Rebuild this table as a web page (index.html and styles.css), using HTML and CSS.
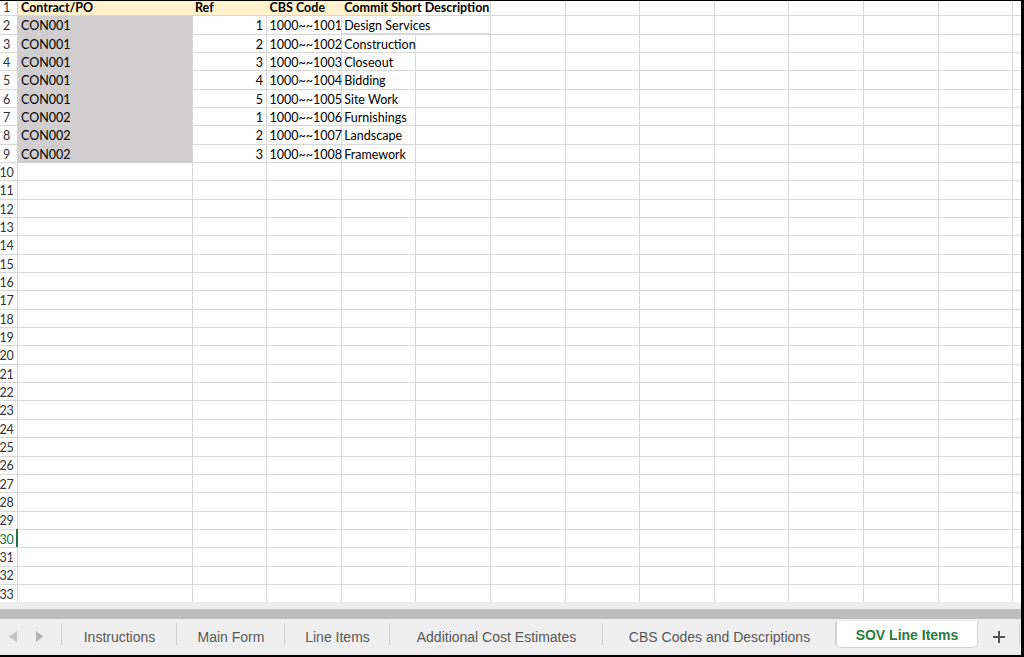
FILE: index.html
```html
<!DOCTYPE html>
<html>
<head>
<meta charset="utf-8">
<title>SOV Line Items</title>
<link rel="stylesheet" href="styles.css">
</head>
<body>
<div class="frame">
  <div class="sheet">
    <div class="grid">
      <div class="rh">1</div>
      <div class="cell hdr">Contract/PO</div>
      <div class="cell hdr">Ref</div>
      <div class="cell hdr">CBS Code</div>
      <div class="cell hdr">Commit Short Description</div>

      <div class="rh">2</div>
      <div class="cell fill">CON001</div>
      <div class="cell num">1</div>
      <div class="cell">1000~~1001</div>
      <div class="cell overflow">Design Services</div>

      <div class="rh">3</div>
      <div class="cell fill">CON001</div>
      <div class="cell num">2</div>
      <div class="cell">1000~~1002</div>
      <div class="cell">Construction</div>

      <div class="rh">4</div>
      <div class="cell fill">CON001</div>
      <div class="cell num">3</div>
      <div class="cell">1000~~1003</div>
      <div class="cell">Closeout</div>

      <div class="rh">5</div>
      <div class="cell fill">CON001</div>
      <div class="cell num">4</div>
      <div class="cell">1000~~1004</div>
      <div class="cell">Bidding</div>

      <div class="rh">6</div>
      <div class="cell fill">CON001</div>
      <div class="cell num">5</div>
      <div class="cell">1000~~1005</div>
      <div class="cell">Site Work</div>

      <div class="rh">7</div>
      <div class="cell fill">CON002</div>
      <div class="cell num">1</div>
      <div class="cell">1000~~1006</div>
      <div class="cell">Furnishings</div>

      <div class="rh">8</div>
      <div class="cell fill">CON002</div>
      <div class="cell num">2</div>
      <div class="cell">1000~~1007</div>
      <div class="cell">Landscape</div>

      <div class="rh">9</div>
      <div class="cell fill">CON002</div>
      <div class="cell num">3</div>
      <div class="cell">1000~~1008</div>
      <div class="cell">Framework</div>

      <div class="rh">10</div>
      <div class="rh">11</div>
      <div class="rh">12</div>
      <div class="rh">13</div>
      <div class="rh">14</div>
      <div class="rh">15</div>
      <div class="rh">16</div>
      <div class="rh">17</div>
      <div class="rh">18</div>
      <div class="rh">19</div>
      <div class="rh">20</div>
      <div class="rh">21</div>
      <div class="rh">22</div>
      <div class="rh">23</div>
      <div class="rh">24</div>
      <div class="rh">25</div>
      <div class="rh">26</div>
      <div class="rh">27</div>
      <div class="rh">28</div>
      <div class="rh">29</div>
      <div class="rh active">30</div>
      <div class="rh">31</div>
      <div class="rh">32</div>
      <div class="rh">33</div>
    </div>
  </div>

  <div class="hscroll">
    <div class="hscroll-bar"></div>
  </div>

  <div class="tabbar">
    <div class="nav">
      <svg width="61" height="31" viewBox="0 0 61 31">
        <polygon points="17,10 9,15.5 17,21" fill="#c4c4c4"/>
        <polygon points="36,10 43,15.5 36,21" fill="#b4b4b4"/>
      </svg>
    </div>
    <div class="tab t-instr">Instructions</div>
    <div class="tab t-main">Main Form</div>
    <div class="tab t-line">Line Items</div>
    <div class="tab t-add">Additional Cost Estimates</div>
    <div class="tab t-cbs">CBS Codes and Descriptions</div>
    <div class="tab-active">SOV Line Items</div>
    <div class="add">
      <svg width="14" height="14" viewBox="0 0 14 14">
        <path d="M7 1v12M1 7h12" stroke="#555" stroke-width="2" fill="none"/>
      </svg>
    </div>
  </div>
  <div class="bottom-strip"></div>
</div>
</body>
</html>
```

FILE: styles.css
```css
* {
  box-sizing: border-box;
}

html, body {
  margin: 0;
  padding: 0;
  background: #ffffff;
}

.frame {
  width: 1024px;
  height: 657px;
  border-top: 1px solid #000;
  border-right: 3px solid #000;
  border-bottom: 2px solid #000;
  display: flex;
  flex-direction: column;
  overflow: hidden;
}

.sheet {
  height: 601px;
  flex: none;
  overflow: hidden;
  background: #fff;
}

.grid {
  margin-top: -3.4px;
  display: grid;
  grid-template-columns: 18px 174px repeat(4, 74.6px) 1fr;
  grid-template-rows: repeat(33, 18.34px);
  font-family: Lato, "Open Sans", sans-serif;
  font-size: 12.5px;
  color: #000;
  background-image:
    repeating-linear-gradient(to bottom, transparent 0, transparent 17.34px, #d8d8d8 17.34px, #d8d8d8 18.34px),
    repeating-linear-gradient(to right, transparent 0, transparent 73.6px, #d8d8d8 73.6px, #d8d8d8 74.6px);
  background-repeat: no-repeat, no-repeat;
  background-position: 0 0, 118.4px 0;
  background-size: 100% 100%, 100% 100%;
}

.rh {
  grid-column: 1;
  display: flex;
  justify-content: center;
  align-items: center;
  padding-right: 4px;
  padding-top: 1.5px;
  border-right: 1px solid #d0d0d0;
  overflow: hidden;
  color: #333;
  white-space: nowrap;
  letter-spacing: -0.3px;
}

.rh.active {
  color: #217346;
  border-right: 2px solid #217346;
  padding-right: 3px;
}

.cell {
  display: flex;
  align-items: center;
  padding: 1.5px 3px 0 3px;
  white-space: nowrap;
  overflow: visible;
}

.hdr {
  background: #fff2cc;
  font-weight: 700;
  border-bottom: 1px solid #d8d8d8;
  padding-top: 2.5px;
}

.fill {
  background: #d0cece;
}

.num {
  justify-content: flex-end;
  padding-right: 3.5px;
}

.overflow {
  grid-column: span 2;
  background: #fff;
  border-left: 1px solid #d8d8d8;
  border-bottom: 1px solid #d8d8d8;
  padding-left: 2px;
  padding-top: 2.5px;
}

.hscroll {
  height: 19px;
  flex: none;
  background: #eeeeee;
  padding-top: 7px;
}

.hscroll-bar {
  height: 10px;
  background: #bdbdbd;
}

.tabbar {
  height: 31px;
  flex: none;
  display: flex;
  align-items: stretch;
  background: #efefef;
  font-family: "Liberation Sans", Arial, sans-serif;
  font-size: 14px;
  color: #585858;
}

.nav {
  width: 62px;
  flex: none;
  background: linear-gradient(#cfcfcf, #cfcfcf) right 2px / 1px 22px no-repeat;
}

.nav svg {
  display: block;
}

.tab {
  flex: none;
  display: flex;
  align-items: center;
  justify-content: center;
  white-space: nowrap;
  background: linear-gradient(#cfcfcf, #cfcfcf) right 2px / 1px 22px no-repeat;
}

.t-instr { width: 115px; }
.t-main { width: 108px; }
.t-line { width: 105px; }
.t-add { width: 213px; }
.t-cbs { width: 233px; }

.tab-active {
  flex: none;
  width: 142px;
  height: 27px;
  display: flex;
  align-items: center;
  justify-content: center;
  padding-top: 2px;
  background: #fff;
  border: 1px solid #d2d2d2;
  border-top: none;
  border-radius: 0 0 5px 5px;
  color: #2a7b3b;
  font-weight: 700;
  white-space: nowrap;
}

.add {
  flex: none;
  width: 42px;
  display: flex;
  align-items: center;
  justify-content: center;
  background: linear-gradient(#cfcfcf, #cfcfcf) right 4px / 1px 20px no-repeat;
}

.add svg {
  display: block;
}

.bottom-strip {
  flex: 1;
  background: #ececec;
}
```
